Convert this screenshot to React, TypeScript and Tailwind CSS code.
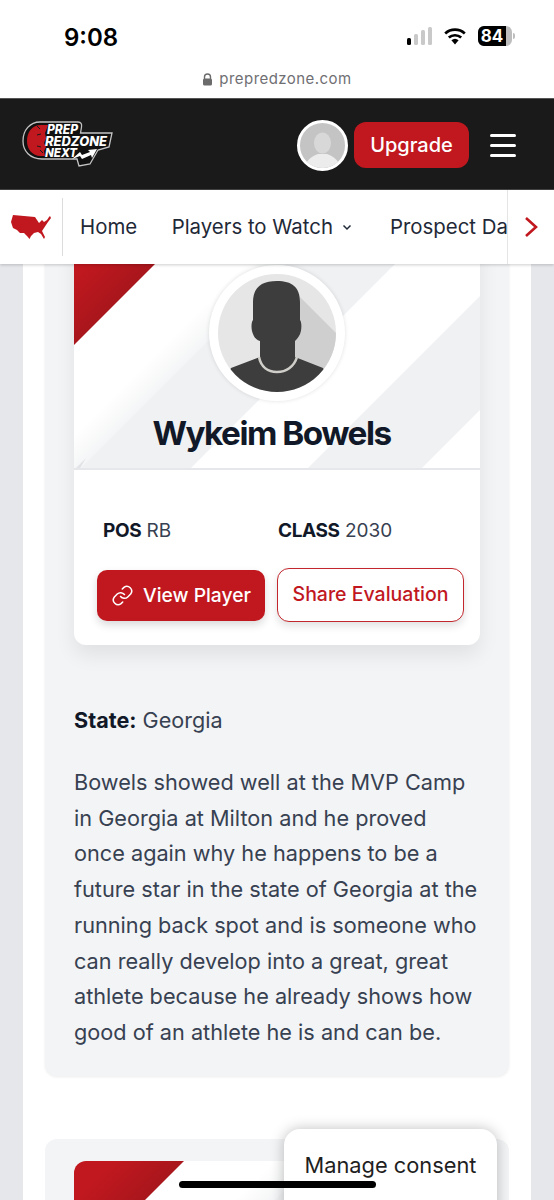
import React from "react";

const inter = "font-['Inter',sans-serif]";

function Logo() {
  const t = { fill: "#fff", fontFamily: "Inter, sans-serif", fontWeight: 800, fontStyle: "italic" } as const;
  return (
    <svg width="92" height="48" viewBox="0 0 92 48" className="shrink-0">
      <path d="M18 1H56c3 0 4 2 3.500 5l-1 6H90l-3 14-11 3-8 14-11 2-2-7H20C8 38 1 30 1 20 1 9 8 1 18 1z" fill="#111" stroke="#c4c4c4" strokeWidth="1.3" />
      <path d="M19 4C10 4 5 11 5 20c0 8 5 15 14 15h4l-1-5 2-4-2-4 2-5-1-5 2-5 1-3z" fill="#c1181f" />
      <path d="M15 5l3 3M21 32l-3-3M19 13l-4 1M19 26l-4-1" stroke="#1a1a1a" strokeWidth="1" />
      <text x="25" y="13" fontSize="12.5" textLength="31" lengthAdjust="spacingAndGlyphs" {...t}>PREP</text>
      <text x="23" y="25" fontSize="12.5" textLength="62" lengthAdjust="spacingAndGlyphs" {...t}>REDZONE</text>
      <text x="23" y="36" fontSize="12" textLength="32" lengthAdjust="spacingAndGlyphs" {...t}>NEXT</text>
      <path d="M50 38l8-7 2 3 8-3-2-2 9-1-5 9-1-3-9 4-2-3z" fill="#fff" />
    </svg>
  );
}

function UsaMap() {
  return (
    <svg width="40" height="26" viewBox="0 0 40 26" className="shrink-0">
      <path
        d="M2 1L24 3 26 6 28 9 31 6 33 8 36 6 38 3 39 2 40 4 37 8 35 11 33 14 31 17 34 23 33 25 30 20 27 18 23 19 20 22 18.500 25 16 22 13 19 9 19 6 16 2 14 0 8Z"
        fill="#c1181f"
      />
    </svg>
  );
}

function Silhouette() {
  return (
    <svg width="118" height="118" viewBox="0 0 118 118" className="rounded-full">
      <rect width="118" height="118" fill="#e6e6e6" />
      <path d="M82 23L118 59V100H75V70z" fill="#cfcfcf" />
      <path d="M35 28C35 13 44 7 59 7C74 7 82 13 82 28L82 46C84 48 84 58 81 62C79 65 78 66 77 67L77 83L105 94L118 118H0L13 94L42 83L42 67C38 66 36 63 35 60C33 56 33 48 35 46Z" fill="#3d3d3d" />
      <path d="M41 83C43 93 50 98 59 98C68 98 76 93 79 83" fill="none" stroke="#d0cec9" strokeWidth="2.6" />
    </svg>
  );
}

function Stripes({ h }: { h: number }) {
  return (
    <svg className="absolute left-0 top-0" width="406" height={h} viewBox={`0 0 406 ${h}`}>
      <defs>
        <linearGradient id="s1" gradientUnits="userSpaceOnUse" x1="100" y1="100" x2="120" y2="120">
          <stop offset="0" stopColor="#ffffff" />
          <stop offset="1" stopColor="#f4f5f6" />
        </linearGradient>
        <linearGradient id="s2" gradientUnits="userSpaceOnUse" x1="380" y1="200" x2="345" y2="165">
          <stop offset="0" stopColor="#e6e7ea" />
          <stop offset="0.45" stopColor="#ffffff" />
        </linearGradient>
        <linearGradient id="r1" gradientUnits="userSpaceOnUse" x1="20" y1="20" x2="55" y2="55">
          <stop offset="0" stopColor="#c1181f" />
          <stop offset="1" stopColor="#a8161c" />
        </linearGradient>
      </defs>
      <rect width="406" height="235" fill="#f0f1f3" />
      <polygon points="0,0 240,0 5,235 0,235" fill="url(#s1)" />
      <polygon points="0,235 12,223 5,235" fill="#e2e3e6" />
      <polygon points="350,0 406,0 406,61 232,235 115,235" fill="url(#s2)" />
      <polygon points="406,175 406,235 346,235" fill="#ffffff" />
      <polygon points="0,0 110,0 0,110" fill="url(#r1)" />
    </svg>
  );
}

function PlayerCard() {
  return (
    <div className="rounded-xl bg-white shadow-[0_10px_20px_rgba(0,0,0,0.08)] overflow-hidden">
      <div className="relative h-[235px] border-b-2 border-[#e5e7eb]">
        <Stripes h={233} />
        <div className="relative flex flex-col items-center pt-[30px]">
          <div className="w-[136px] h-[136px] rounded-full bg-white shadow-[0_0_4px_rgba(0,0,0,0.12)] flex items-center justify-center">
            <Silhouette />
          </div>
          <h2 className="mt-[13px] mr-[11px] text-[33.3px] leading-[38px] font-bold tracking-[-0.045em] text-[#111827]">Wykeim Bowels</h2>
        </div>
      </div>
      <div className="pt-[49px] pb-[23px] pl-[23px] pr-[16px]">
        <div className="flex text-[19px] leading-[24px] text-[#374151] pl-[6px]">
          <div className="w-[175px]"><span className="font-bold tracking-[-0.02em] text-[#111827]">POS</span> RB</div>
          <div><span className="font-bold tracking-[-0.02em] text-[#111827]">CLASS</span> 2030</div>
        </div>
        <div className="mt-[25px] flex items-center gap-[12px]">
          <button className="w-[168px] h-[51px] rounded-[10px] bg-[#c1181f] text-white text-[19.3px] font-medium flex items-center justify-center gap-[9px] shadow-[0_4px_8px_rgba(0,0,0,0.15)]">
            <svg width="23" height="23" viewBox="0 0 24 24" fill="none" stroke="#fff" strokeWidth="1.6" strokeLinecap="round" strokeLinejoin="round">
              <path d="M10 13a5 5 0 0 0 7.500.5l3-3a5 5 0 0 0-7-7l-1.700 1.700" />
              <path d="M14 11a5 5 0 0 0-7.500-.5l-3 3a5 5 0 0 0 7 7l1.700-1.700" />
            </svg>
            View Player
          </button>
          <button className="w-[187px] h-[54px] rounded-[12px] bg-white border-[1.5px] border-[#c1272d] text-[#c1181f] text-[19.5px] font-medium shadow-[0_4px_8px_rgba(0,0,0,0.12)]">
            Share Evaluation
          </button>
        </div>
      </div>
    </div>
  );
}

export default function App() {
  return (
    <div className={`${inter} relative w-[554px] h-[1200px] overflow-hidden bg-white flex flex-col`}>
      {/* iOS status bar */}
      <div className="h-[66px] bg-white flex items-end justify-between pl-[64px] pr-[39px] pb-[13px] shrink-0">
        <span className="text-[24px] leading-[30px] font-semibold text-black">9:08</span>
        <div className="flex items-center gap-[11px] mb-[7px]">
          <div className="flex items-end gap-[3px] h-[18px]">
            <div className="w-[4px] h-[7px] rounded-[1.5px] bg-black" />
            <div className="w-[4px] h-[11px] rounded-[1.5px] bg-[#c9c9c9]" />
            <div className="w-[4px] h-[15px] rounded-[1.5px] bg-[#c9c9c9]" />
            <div className="w-[4px] h-[18px] rounded-[1.5px] bg-[#c9c9c9]" />
          </div>
          <svg width="24" height="18" viewBox="0 0 24 18">
            <path d="M12 17.500l-3.600-4.200a5.400 5.400 0 0 1 7.200 0z" fill="#000" />
            <path d="M5.800 10.600a9.400 9.400 0 0 1 12.400 0M2.200 6.400a14.600 14.600 0 0 1 19.600 0" fill="none" stroke="#000" strokeWidth="2.7" />
          </svg>
          <div className="flex items-center gap-[1px]">
            <div className="relative w-[34px] h-[20px] rounded-[6px] bg-[#bdbdbd] overflow-hidden">
              <div className="w-[28px] h-full bg-black flex items-center justify-center">
                <span className="text-[17px] leading-none font-bold text-white">84</span>
              </div>
            </div>
            <div className="w-[2px] h-[6px] rounded-r bg-[#bdbdbd]" />
          </div>
        </div>
      </div>

      {/* URL bar */}
      <div className="h-[33px] bg-white flex items-start justify-center gap-[6px] pt-[3px] shrink-0 border-b border-[#555]">
        <svg width="11" height="13" viewBox="0 0 11 13" className="mt-[4px]">
          <path d="M2.500 6V4a3 3 0 0 1 6 0v2" fill="none" stroke="#6b6b6b" strokeWidth="1.4" />
          <rect x="1" y="5.500" width="9" height="7" rx="1.500" fill="#6b6b6b" />
        </svg>
        <span className="text-[15px] leading-[20px] tracking-[0.03em] text-[#6f6f73]">prepredzone.com</span>
      </div>

      {/* Dark header */}
      <header className="h-[91px] bg-[#1a1a1a] flex items-center pl-[22px] pr-[38px] pt-[2px] shrink-0 border-b border-[#444]">
        <Logo />
        <div className="ml-auto flex items-center">
          <div className="w-[51px] h-[51px] rounded-full border-[3px] border-white bg-[#c4c4c4] overflow-hidden flex items-center justify-center">
            <svg width="45" height="45" viewBox="0 0 45 45">
              <ellipse cx="22.500" cy="20" rx="8.500" ry="10.500" fill="#d8d8d8" />
              <path d="M5 45c1-9 8-12 13-14h9c5 2 12 5 13 14z" fill="#ececec" />
            </svg>
          </div>
          <button className="ml-[6px] w-[115px] h-[46px] rounded-[12px] bg-[#c1181f] text-white text-[20px] font-medium">Upgrade</button>
          <div className="ml-[21px] w-[26px] flex flex-col gap-[7px]">
            <div className="h-[3px] bg-white rounded" />
            <div className="h-[3px] bg-white rounded" />
            <div className="h-[3px] bg-white rounded" />
          </div>
        </div>
      </header>

      {/* Nav */}
      <nav className="relative z-10 h-[74px] bg-white flex items-center shrink-0 shadow-[0_1px_3px_rgba(0,0,0,0.2)]">
        <div className="w-[63px] h-[58px] flex items-center pl-[11px] border-r border-[#dcdcdc]">
          <UsaMap />
        </div>
        <div className="w-[444px] h-full overflow-hidden flex items-center pl-[17px] text-[20.4px] text-[#1f2937] whitespace-nowrap">
          <span className="shrink-0">Home</span>
          <span className="shrink-0 ml-[34.500px]">Players to Watch</span>
          <svg width="12" height="12" viewBox="0 0 12 12" className="ml-[8px] shrink-0" fill="none" stroke="#1f2937" strokeWidth="1.5">
            <path d="M2.500 4.500L6 8l3.500-3.500" />
          </svg>
          <span className="shrink-0 ml-[37px]">Prospect Days</span>
        </div>
        <div className="flex-1 h-full border-l border-[#e5e5e5] flex items-center justify-center">
          <svg width="16" height="22" viewBox="0 0 16 22" fill="none" stroke="#c1181f" strokeWidth="2.6">
            <path d="M3 2l10 9-10 9" />
          </svg>
        </div>
      </nav>

      {/* Scrolled content */}
      <main className="flex-1 overflow-hidden bg-[#e5e7eb] px-[23px]">
        <div className="-mt-[51px] bg-white px-[22px] pb-[60px] h-[1100px]">
          <section className="rounded-xl bg-[#f3f4f6] pt-[22px] px-[29px] pb-[25px] shadow-[0_1px_3px_rgba(0,0,0,0.08)]">
            <PlayerCard />
            <p className="mt-[57px] text-[21.6px] leading-[36px] text-[#374151]">
              <span className="font-bold text-[#111827]">State:</span> Georgia
            </p>
            <p className="mt-[27px] text-[21.7px] leading-[35.7px] text-[#374151]">
              Bowels showed well at the MVP Camp in Georgia at Milton and he proved once again why he happens to be a future star in the state of Georgia at the running back spot and is someone who can really develop into a great, great athlete because he already shows how good of an athlete he is and can be.
            </p>
          </section>
          <section className="mt-[63px] rounded-xl bg-[#f3f4f6] pt-[22px] px-[29px] pb-[28px]">
            <div className="relative h-[235px] rounded-t-xl overflow-hidden">
              <Stripes h={235} />
            </div>
          </section>
        </div>
      </main>

      {/* Overlays */}
      <div className="absolute left-[284px] top-[1129px] w-[213px] h-[120px] rounded-[16px] bg-white shadow-[0_0_14px_rgba(0,0,0,0.25)] pt-[20px] text-center text-[21.8px] leading-[32px] text-[#1f1f1f]">
        Manage consent
      </div>
      <div className="absolute left-[179px] top-[1181px] w-[197px] h-[7px] rounded-full bg-black" />
    </div>
  );
}
